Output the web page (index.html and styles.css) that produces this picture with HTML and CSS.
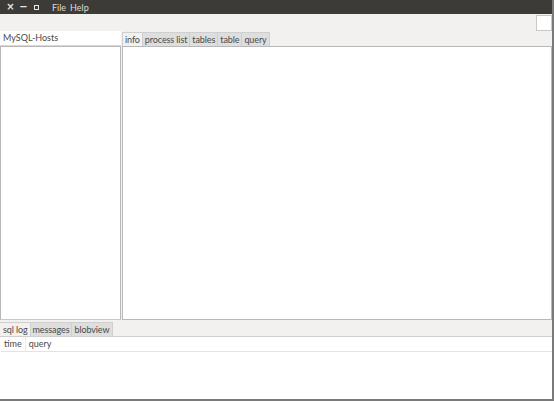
FILE: index.html
```html
<!DOCTYPE html>
<html>
<head>
<meta charset="utf-8">
<link rel="stylesheet" href="styles.css">
</head>
<body>
<div class="win">
  <div class="menubar">
    <div class="wbtns">
      <span class="wb">×</span>
      <span class="wb">−</span>
      <span class="wb sq"><span></span></span>
    </div>
    <span class="mi">File</span>
    <span class="mi">Help</span>
  </div>
  <div class="toolbar">
    <div class="tbox"></div>
  </div>
  <div class="main">
    <div class="left">
      <div class="lhead">MySQL-Hosts</div>
      <div class="llist"></div>
    </div>
    <div class="right">
      <div class="tabs">
        <span class="tab active">info</span>
        <span class="tab">process list</span>
        <span class="tab">tables</span>
        <span class="tab">table</span>
        <span class="tab">query</span>
      </div>
      <div class="rpanel"></div>
    </div>
  </div>
  <div class="bottom">
    <div class="tabs btabs">
      <span class="tab active">sql log</span>
      <span class="tab">messages</span>
      <span class="tab">blobview</span>
    </div>
    <div class="bpanel">
      <div class="cols">
        <span class="col">time</span>
        <span class="col">query</span>
      </div>
    </div>
  </div>
</div>
</body>
</html>
```
FILE: styles.css
```css
html, body {
  margin: 0;
  padding: 0;
  width: 554px;
  height: 401px;
  overflow: hidden;
}
body {
  font-family: Lato, "DejaVu Sans", sans-serif;
  font-size: 9px;
  color: #4a4a4a;
  background: #f2f1f0;
}
.win {
  width: 554px;
  height: 401px;
  display: flex;
  flex-direction: column;
  box-sizing: border-box;
  border-right: 2px solid #7a7a7a;
  border-bottom: 2px solid #7a7a7a;
}
.menubar {
  height: 14px;
  background: #3c3b37;
  display: flex;
  align-items: center;
  color: #dfdbd2;
  flex: none;
}
.wbtns {
  display: flex;
  padding-left: 4px;
  width: 52px;
  box-sizing: border-box;
}
.wb {
  width: 13px;
  text-align: center;
  font-family: "DejaVu Sans", sans-serif;
  font-size: 10px;
  color: #e8e6e1;
  font-weight: bold;
  line-height: 14px;
}
.wb.sq {
  display: flex;
  align-items: center;
  justify-content: center;
}
.wb.sq span {
  display: block;
  width: 3px;
  height: 3px;
  border: 1px solid #e8e6e1;
}
.mi {
  margin-right: 4px;
  font-size: 9px;
}
.toolbar {
  height: 17px;
  flex: none;
  display: flex;
  justify-content: flex-end;
  align-items: flex-start;
  padding-top: 1px;
  box-sizing: border-box;
}
.tbox {
  width: 14px;
  height: 14px;
  background: #fff;
  border: 1px solid #c8c8c8;
}
.main {
  flex: 1;
  display: flex;
  min-height: 0;
}
.left {
  width: 121px;
  flex: none;
  display: flex;
  flex-direction: column;
  margin-right: 1px;
}
.lhead {
  height: 14px;
  background: #fff;
  line-height: 14px;
  padding-left: 3px;
  border-bottom: 1px solid #d8d8d8;
  flex: none;
}
.llist {
  flex: 1;
  background: #fff;
  border: 1px solid #b8b8b8;
  border-bottom-color: #c8c8c8;
}
.right {
  flex: 1;
  display: flex;
  flex-direction: column;
}
.tabs {
  display: flex;
  height: 14px;
  padding-top: 1px;
  flex: none;
}
.tab {
  line-height: 13px;
  padding: 0 2px;
  background: #dedede;
  border: 1px solid #cfcfcf;
  border-bottom: none;
  border-left: none;
  box-sizing: border-box;
  height: 14px;
  letter-spacing: -0.1px;
}
.tab.active {
  background: #f2f1f0;
  border-left: 1px solid #cfcfcf;
}
.rpanel {
  flex: 1;
  background: #fff;
  border: 1px solid #b8b8b8;
}
.bottom {
  height: 79px;
  flex: none;
  display: flex;
  flex-direction: column;
  padding-top: 1px;
  box-sizing: border-box;
}
.btabs .tab.active {
  border-left: none;
  padding-left: 3px;
}
.btabs .tab:last-child {
  padding-right: 3px;
}
.bpanel {
  flex: 1;
  background: #fff;
  border-top: 1px solid #cfcfcf;
}
.cols {
  display: flex;
  height: 14px;
  border-bottom: 1px solid #e3e3e3;
  margin-left: 1px;
}
.col {
  line-height: 14px;
  padding: 0 3px;
  border-right: 1px solid #ececec;
}
.col:last-child {
  border-right: none;
}
```
